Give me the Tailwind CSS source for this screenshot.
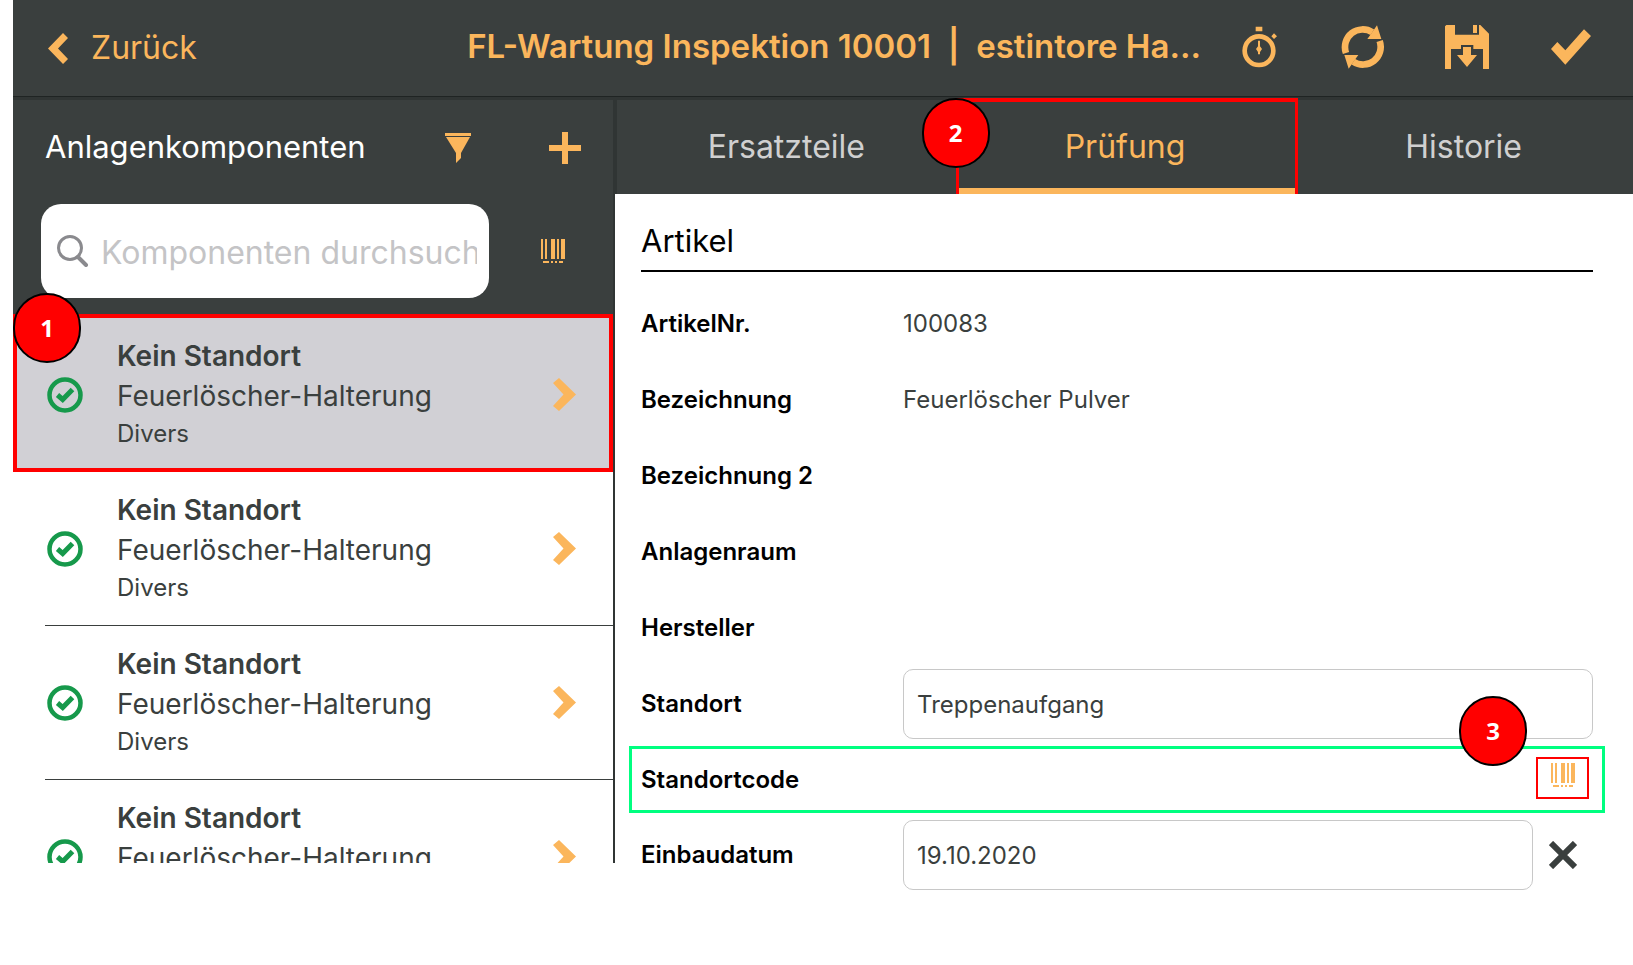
<!DOCTYPE html>
<html lang="de">

<head>
  <meta charset="utf-8">
  <meta name="viewport" content="width=device-width, initial-scale=1">
  <title>FL-Wartung Inspektion 10001</title>
  <script src="https://cdn.jsdelivr.net/npm/@tailwindcss/browser@4"></script>
</head>

<body class="min-h-screen bg-white pl-[13px] font-['Inter',sans-serif] text-[#3a3f3e]">
  <!-- shared icons -->
  <svg class="hidden">
    <symbol id="barcode" viewBox="0 0 72 72">
      <path fill="currentColor" d="M0 0h6v60H0zM12 0h6v60h-6zM30 0h12v60H30zM48 0h6v60h-6zM60 0h12v60H60zM6 66h18v6H6zM30 66h6v6h-6zM42 66h6v6h-6zM54 66h12v6H54z" />
    </symbol>
    <symbol id="chevron" viewBox="0 0 23 33">
      <path fill="currentColor" d="M0 5L6 0L23 16.500L6 33L0 28L10.500 16.500z" />
    </symbol>
    <symbol id="done" viewBox="0 0 36 36">
      <circle cx="18" cy="18" r="15.500" fill="none" stroke="currentColor" stroke-width="4.500" />
      <path d="M10.500 18L15.700 22.500L25.500 12.500" fill="none" stroke="currentColor" stroke-width="5" />
    </symbol>
  </svg>

  <header class="flex h-[97px] items-center border-b border-[#1f2423] bg-[#3a3f3e] pr-[10px] pb-[3px] pl-[35px] text-[#fbb65c]">
    <button class="flex items-center gap-[23px] pt-[3px] text-[32px] whitespace-nowrap">
      <svg class="h-[31px] w-5" viewBox="0 0 20 31"><path fill="currentColor" d="M15 0L20 5L10 15.500L20 26L15 31L0 15.500z" /></svg>
      Zurück
    </button>
    <h1 class="mr-[6px] ml-auto truncate text-[33px] font-semibold whitespace-pre">FL-Wartung Inspektion 10001  |  estintore Ha...</h1>
    <button class="flex w-[104px] shrink-0 justify-center" aria-label="Zeit">
      <svg class="h-[44px] w-9" viewBox="124 68 108 132">
        <g fill="currentColor">
          <path d="M168 73h20v14h-20zM215 102l8-9l9 9l-9 8zM175 115h6v17l6 8l-6 9v7h-6v-7l-6-9l6-8z" />
          <circle cx="178" cy="145" r="43" fill="none" stroke="currentColor" stroke-width="14" />
        </g>
      </svg>
    </button>
    <button class="flex w-[104px] shrink-0 justify-center" aria-label="Synchronisieren">
      <svg class="h-[44px] w-[44px]" viewBox="426 69 132 132">
        <g id="half">
          <path d="M441 153A53 53 0 0 1 520 91" fill="none" stroke="currentColor" stroke-width="20" />
          <path d="M534 70L547 111H505L511 103z" fill="currentColor" />
        </g>
        <use href="#half" transform="rotate(180 491.500 135)" />
      </svg>
    </button>
    <button class="flex w-[104px] shrink-0 justify-center" aria-label="Speichern">
      <svg class="h-[44px] w-[44px]" viewBox="735 69 132 132">
        <path fill="currentColor" d="M739 69H765V98H837V69H841L867 95V201H849V141H820V129H783V141H753V201H735V73zM819 69h12v24h-12zM789 135H813V159H831L801 195L771 159H789z" />
      </svg>
    </button>
    <button class="flex w-[104px] shrink-0 justify-center" aria-label="Fertig">
      <svg class="h-9 w-10" viewBox="1053 82 120 108"><path fill="currentColor" d="M1053 142L1072 121L1096 146L1152 83L1173 103L1096 189z" /></svg>
    </button>
  </header>

  <div class="flex items-start">
    <aside class="h-[766px] w-[602px] shrink-0 overflow-hidden border-r-2 border-[#303534]">
      <div class="border-t-[3px] border-[#303534] bg-[#3a3f3e] pb-4">
        <div class="flex h-24 items-center pr-8 pl-8 text-[#fbb65c]">
          <h2 class="pb-[2px] text-[31px] text-white">Anlagenkomponenten</h2>
          <button class="ml-auto" aria-label="Filter">
            <svg class="h-[30px] w-[26px]" viewBox="0 0 26 30"><path fill="currentColor" d="M0 0h26v3H0zM1 4h24L16 20v5l-5 5V20z" /></svg>
          </button>
          <button class="ml-[78px]" aria-label="Hinzufügen">
            <svg class="h-8 w-8" viewBox="0 0 32 32"><path fill="currentColor" d="M13 0h6v13h13v6H19v13h-6V19H0v-6h13z" /></svg>
          </button>
        </div>
        <div class="mt-2 flex items-center pr-12 pl-7">
          <label class="flex h-[94px] w-[448px] items-center gap-3 rounded-[20px] bg-white pr-3 pl-4">
            <svg class="h-8 w-8 shrink-0 text-[#8a8a8e]" viewBox="0 0 32 32" fill="none" stroke="currentColor">
              <circle cx="13" cy="13" r="11.500" stroke-width="3" />
              <path d="M21 22L29 30" stroke-width="4" stroke-linecap="round" />
            </svg>
            <input type="text" placeholder="Komponenten durchsuchen" aria-label="Komponenten durchsuchen" class="w-full min-w-0 pt-1 text-[32px] outline-none placeholder:text-[#c4c4c6]">
          </label>
          <button class="ml-auto text-[#fbb65c]" aria-label="Barcode scannen">
            <svg class="h-6 w-6"><use href="#barcode" /></svg>
          </button>
        </div>
      </div>

      <ul>
        <li class="relative">
          <a href="#" class="flex h-[158px] items-center border-4 border-[#ff0000] bg-[#d1d0d5] pt-[3px] pr-[33px] pl-[30px]">
            <svg class="h-9 w-9 text-[#16994b]"><use href="#done" /></svg>
            <span class="ml-[34px] pb-[2px]">
              <span class="block text-[28px] leading-10 font-semibold">Kein Standort</span>
              <span class="block text-[28px] leading-10">Feuerlöscher-Halterung</span>
              <span class="block text-[24px] leading-9">Divers</span>
            </span>
            <svg class="ml-auto h-[33px] w-[23px] text-[#fbb65c]"><use href="#chevron" /></svg>
          </a>
          <span class="absolute -top-[21px] left-0 flex h-[70px] w-[68px] items-center justify-center rounded-full border-2 border-black bg-[#ff0000] font-['Open_Sans',sans-serif] text-[24px] font-bold text-white">1</span>
        </li>
        <li class="ml-8 border-b border-[#3a3f3e]">
          <a href="#" class="flex h-[153px] items-center pr-[37px] pl-[2px]">
            <svg class="h-9 w-9 text-[#16994b]"><use href="#done" /></svg>
            <span class="ml-[34px] pb-[2px]">
              <span class="block text-[28px] leading-10 font-semibold">Kein Standort</span>
              <span class="block text-[28px] leading-10">Feuerlöscher-Halterung</span>
              <span class="block text-[24px] leading-9">Divers</span>
            </span>
            <svg class="ml-auto h-[33px] w-[23px] text-[#fbb65c]"><use href="#chevron" /></svg>
          </a>
        </li>
        <li class="ml-8 border-b border-[#3a3f3e]">
          <a href="#" class="flex h-[153px] items-center pr-[37px] pl-[2px]">
            <svg class="h-9 w-9 text-[#16994b]"><use href="#done" /></svg>
            <span class="ml-[34px] pb-[2px]">
              <span class="block text-[28px] leading-10 font-semibold">Kein Standort</span>
              <span class="block text-[28px] leading-10">Feuerlöscher-Halterung</span>
              <span class="block text-[24px] leading-9">Divers</span>
            </span>
            <svg class="ml-auto h-[33px] w-[23px] text-[#fbb65c]"><use href="#chevron" /></svg>
          </a>
        </li>
        <li class="ml-8 border-b border-[#3a3f3e]">
          <a href="#" class="flex h-[153px] items-center pr-[37px] pl-[2px]">
            <svg class="h-9 w-9 text-[#16994b]"><use href="#done" /></svg>
            <span class="ml-[34px] pb-[2px]">
              <span class="block text-[28px] leading-10 font-semibold">Kein Standort</span>
              <span class="block text-[28px] leading-10">Feuerlöscher-Halterung</span>
              <span class="block text-[24px] leading-9">Divers</span>
            </span>
            <svg class="ml-auto h-[33px] w-[23px] text-[#fbb65c]"><use href="#chevron" /></svg>
          </a>
        </li>
      </ul>
    </aside>

    <main class="min-w-0 flex-1">
      <nav class="grid h-[97px] grid-cols-3 border-t-[3px] border-l-2 border-[#303534] bg-[#3a3f3e] text-[32px] text-[#d0d0d0]">
        <button>Ersatzteile</button>
        <div class="relative -mt-[2px] -mr-1 flex border-x-[3px] border-t-4 border-[#ff0000]">
          <button class="flex-1 border-b-[6px] border-[#fbb65c] pt-1 pr-1 text-[#fbb65c]">Prüfung</button>
          <span class="absolute -top-1 -left-[37px] flex h-[70px] w-[68px] items-center justify-center rounded-full border-2 border-black bg-[#ff0000] font-['Open_Sans',sans-serif] text-[24px] font-bold text-white">2</span>
        </div>
        <button>Historie</button>
      </nav>

      <form class="pr-10 pl-[26px] text-[24px]">
        <h2 class="mb-[14px] flex h-[78px] items-end border-b-2 border-black pb-[6px] text-[31px] text-black">Artikel</h2>
        <div class="flex h-[76px] items-center">
          <span class="w-[262px] shrink-0 font-semibold text-black">ArtikelNr.</span>
          <span>100083</span>
        </div>
        <div class="flex h-[76px] items-center">
          <span class="w-[262px] shrink-0 font-semibold text-black">Bezeichnung</span>
          <span>Feuerlöscher Pulver</span>
        </div>
        <div class="flex h-[76px] items-center">
          <span class="w-[262px] shrink-0 font-semibold text-black">Bezeichnung 2</span>
        </div>
        <div class="flex h-[76px] items-center">
          <span class="w-[262px] shrink-0 font-semibold text-black">Anlagenraum</span>
        </div>
        <div class="flex h-[76px] items-center">
          <span class="w-[262px] shrink-0 font-semibold text-black">Hersteller</span>
        </div>
        <div class="flex h-[76px] items-center">
          <label for="standort" class="w-[262px] shrink-0 font-semibold text-black">Standort</label>
          <input id="standort" type="text" value="Treppenaufgang" class="h-[70px] min-w-0 flex-1 rounded-[10px] border border-[#c8c8c8] px-[13px]">
        </div>
        <div class="relative -mx-3 my-1 flex h-[67px] items-center border-[3px] border-[#00ff80] px-[9px]">
          <span class="w-[262px] shrink-0 font-semibold text-black">Standortcode</span>
          <button type="button" class="mr-1 mb-1 ml-auto flex h-[42px] w-[53px] justify-center border-2 border-[#ff0000] pt-1 text-[#fbb65c]" aria-label="Standortcode scannen">
            <svg class="h-6 w-6"><use href="#barcode" /></svg>
          </button>
          <span class="absolute -top-[53px] right-[75px] flex h-[70px] w-[68px] items-center justify-center rounded-full border-2 border-black bg-[#ff0000] font-['Open_Sans',sans-serif] text-[24px] font-bold text-white">3</span>
        </div>
        <div class="flex h-[76px] items-center">
          <label for="einbaudatum" class="w-[262px] shrink-0 font-semibold text-black">Einbaudatum</label>
          <input id="einbaudatum" type="text" value="19.10.2020" class="h-[70px] min-w-0 flex-1 rounded-[10px] border border-[#c8c8c8] px-[13px]">
          <button type="button" class="flex w-[60px] justify-center" aria-label="Datum löschen">
            <svg class="h-7 w-7" viewBox="0 0 28 28"><path d="M2 2L26 26M26 2L2 26" stroke="currentColor" stroke-width="6" /></svg>
          </button>
        </div>
      </form>
    </main>
  </div>
</body>

</html>
